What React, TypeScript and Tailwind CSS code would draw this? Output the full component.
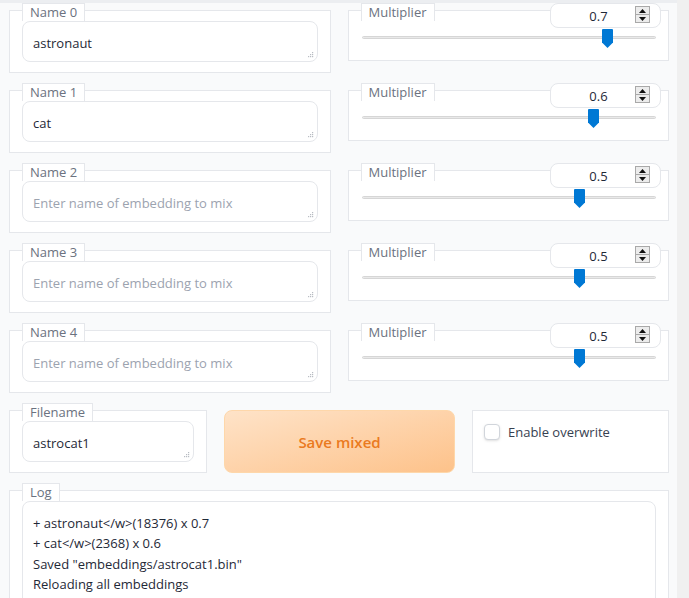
import React from 'react';

const font = { fontFamily: '"Open Sans", "Noto Sans", sans-serif' };

const names = ['astronaut', 'cat', '', '', ''];
const multipliers = [0.7, 0.6, 0.5, 0.5, 0.5];

const logLines = [
  '+ astronaut</w>(18376) x 0.7',
  '+ cat</w>(2368) x 0.6',
  'Saved "embeddings/astrocat1.bin"',
  'Reloading all embeddings',
];

const Label = ({ text }: { text: string }) => (
  <span className="absolute -top-[8px] left-[12px] h-[18px] border border-b-0 border-[#e5e7eb] bg-white px-[7px] text-[13px] leading-[16px] text-[#6b7280]">
    {text}
  </span>
);

const ResizeGrip = () => (
  <svg className="absolute bottom-[3px] right-[3px]" width="7" height="7" viewBox="0 0 7 7">
    <g fill="#b8bcc3">
      <rect x="5" y="1" width="1.2" height="1.2" />
      <rect x="3" y="3" width="1.2" height="1.2" />
      <rect x="5" y="3" width="1.2" height="1.2" />
      <rect x="1" y="5" width="1.2" height="1.2" />
      <rect x="3" y="5" width="1.2" height="1.2" />
      <rect x="5" y="5" width="1.2" height="1.2" />
    </g>
  </svg>
);

const TextBox = ({ value, placeholder }: { value: string; placeholder?: string }) => (
  <div className="relative h-[41px] rounded-lg border border-[#e5e7eb] bg-white px-[10px] pt-[11px] text-[13px] leading-[21px]">
    {value ? (
      <span className="text-[#1f2937]">{value}</span>
    ) : (
      <span className="text-[#9ca3af]">{placeholder}</span>
    )}
    <ResizeGrip />
  </div>
);

const NameBlock = ({ index, value }: { index: number; value: string }) => (
  <div className="relative h-[63px] border border-[#e5e7eb] bg-white px-3 pt-[10px]">
    <Label text={`Name ${index}`} />
    <TextBox value={value} placeholder="Enter name of embedding to mix" />
  </div>
);

const Spinner = () => (
  <div className="absolute right-[10px] top-[2px] flex h-[17px] w-[15px] flex-col border border-[#a9a9a9] bg-[#ececec]">
    <div className="flex flex-1 items-center justify-center border-b border-[#a9a9a9]">
      <svg width="7" height="4" viewBox="0 0 7 4">
        <path d="M3.5 0 L7 4 H0 Z" fill="#111" />
      </svg>
    </div>
    <div className="flex flex-1 items-center justify-center">
      <svg width="7" height="4" viewBox="0 0 7 4">
        <path d="M0 0 H7 L3.5 4 Z" fill="#111" />
      </svg>
    </div>
  </div>
);

const MultiplierBlock = ({ value }: { value: number }) => {
  const pct = (value + 1) / 2;
  return (
    <div className="relative h-[51px] border border-[#e5e7eb] bg-white pl-[13px] pr-3 pt-[18px]">
      <Label text="Multiplier" />
      <div className="absolute -top-[8px] right-[7px] h-[25px] w-[111px] rounded-lg border border-[#e5e7eb] bg-white">
        <div className="pr-[14px] pt-[1px] text-center text-[13px] leading-[23px] text-[#1f2937]">{value}</div>
        <Spinner />
      </div>
      <div className="relative h-[19px]">
        <div className="absolute left-0 right-0 top-[7px] h-[3px] rounded-sm border border-[#d6d6d6] bg-[#e9e9e9]" />
        <svg
          className="absolute top-0"
          style={{ left: `calc((100% - 11px) * ${pct})` }}
          width="11"
          height="19"
          viewBox="0 0 11 19"
        >
          <path d="M1 0 H10 Q11 0 11 1 V13.5 L5.5 19 L0 13.5 V1 Q0 0 1 0 Z" fill="#0078d4" />
        </svg>
      </div>
    </div>
  );
};

export default function App() {
  return (
    <div className="flex h-[598px] w-full overflow-hidden bg-[#f9fafb]" style={font}>
      <div className="w-[677px] shrink-0 border-t-[3px] border-[#eceef1] pl-[9px] pr-[8px] pt-[7px]">
        <div className="flex flex-col gap-[17px]">
          {names.map((n, i) => (
            <div key={i} className="grid grid-cols-2 items-start gap-[17px]">
              <NameBlock index={i} value={n} />
              <MultiplierBlock value={multipliers[i]} />
            </div>
          ))}

          <div className="grid grid-cols-[198px_231px_197px] gap-[17px]">
            <div className="relative h-[63px] border border-[#e5e7eb] bg-white px-3 pt-[10px]">
              <Label text="Filename" />
              <TextBox value="astrocat1" />
            </div>
            <button className="h-[63px] rounded-lg border border-[#fed7aa] bg-gradient-to-br from-[#fee3c8] to-[#fdc28a] pt-[2px] text-[15px] font-semibold text-[#ea7a1e]">
              Save mixed
            </button>
            <div className="h-[63px] border border-[#e5e7eb] bg-white pl-[11px] pt-[12px]">
              <label className="flex items-center gap-[8px] text-[13px] leading-[18px] text-[#374151]">
                <span className="h-[16px] w-[16px] rounded-[4px] border border-[#d1d5db] bg-white shadow-sm" />
                Enable overwrite
              </label>
            </div>
          </div>

          <div className="relative h-[140px] border border-[#e5e7eb] bg-white px-3 pt-[10px]">
            <Label text="Log" />
            <div className="h-[200px] rounded-lg border border-[#e5e7eb] bg-white px-[10px] pt-[11px] text-[13px] leading-[20.3px] text-[#1f2937]">
              {logLines.map((l, i) => (
                <div key={i}>{l}</div>
              ))}
            </div>
          </div>
        </div>
      </div>
      <div className="flex-1 bg-[#f0f0f0]" />
    </div>
  );
}
